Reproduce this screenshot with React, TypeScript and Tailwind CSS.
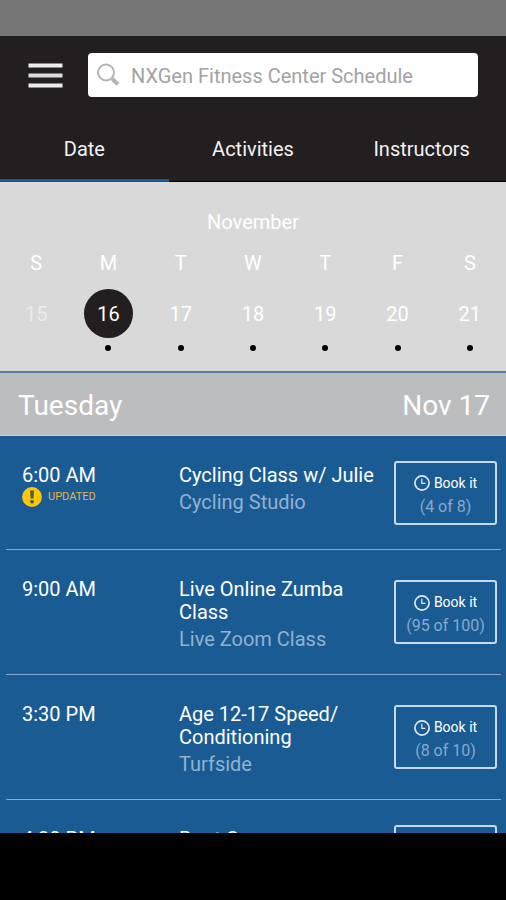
import clsx from 'clsx';

const tabs = ['Date', 'Activities', 'Instructors'];

const days = [
  { letter: 'S', name: 'Sunday', date: 15, past: true },
  { letter: 'M', name: 'Monday', date: 16, selected: true },
  { letter: 'T', name: 'Tuesday', date: 17 },
  { letter: 'W', name: 'Wednesday', date: 18 },
  { letter: 'T', name: 'Thursday', date: 19 },
  { letter: 'F', name: 'Friday', date: 20 },
  { letter: 'S', name: 'Saturday', date: 21 },
];

const classes = [
  { time: '6:00 AM', title: 'Cycling Class w/ Julie', room: 'Cycling Studio', spots: '(4 of 8)', updated: true },
  { time: '9:00 AM', title: 'Live Online Zumba Class', room: 'Live Zoom Class', spots: '(95 of 100)' },
  { time: '3:30 PM', title: 'Age 12-17 Speed/ Conditioning', room: 'Turfside', spots: '(8 of 10)' },
  { time: '4:30 PM', title: 'Boot Camp', room: 'Turfside', spots: '(6 of 12)' },
];

function MenuIcon() {
  return (
    <svg viewBox="0 0 35 25" className="h-[25px] w-[35px]" aria-hidden="true">
      <rect x="0.5" y="0.5" width="34" height="4" fill="#ededed" />
      <rect x="0.5" y="10.5" width="34" height="4" fill="#dcdcdc" />
      <rect x="0.5" y="20.5" width="34" height="4" fill="#ededed" />
    </svg>
  );
}

function SearchIcon() {
  return (
    <svg viewBox="0 0 24 24" className="size-6 shrink-0" fill="none" stroke="#b3b3b3" aria-hidden="true">
      <circle cx="10" cy="9.5" r="8" strokeWidth="2" />
      <path d="M15.5 15l2.5 2.5" strokeWidth="2.2" />
      <path d="M16.4 16l5.6 5.4" strokeWidth="4" />
    </svg>
  );
}

function ClockIcon() {
  return (
    <svg viewBox="0 0 16 16" className="size-4 shrink-0" fill="none" stroke="#dfe9f5" aria-hidden="true">
      <circle cx="8" cy="8" r="7.1" strokeWidth="1.7" />
      <path d="M7.8 3.8v4.5h3.6" strokeWidth="1.2" />
    </svg>
  );
}

function AlertIcon() {
  return (
    <svg viewBox="0 0 20 20" className="size-5 shrink-0" aria-hidden="true">
      <circle cx="10" cy="10" r="9.9" fill="#fdc60b" />
      <path d="M8 3.6h4l-.5 8h-3z" fill="#5a5c3c" />
      <circle cx="10" cy="14.7" r="1.9" fill="#5a5c3c" />
    </svg>
  );
}

function Header() {
  return (
    <header className="bg-[#231f20]">
      <div className="flex items-center px-7 pt-[17px]">
        <button type="button" aria-label="Menu">
          <MenuIcon />
        </button>
        <label className="ml-[25px] flex h-11 flex-1 items-center rounded bg-white pl-2">
          <SearchIcon />
          <input
            type="search"
            aria-label="Search schedule"
            placeholder="NXGen Fitness Center Schedule"
            className="ml-[11px] w-full min-w-0 pt-0.5 text-xl text-gray-700 outline-none placeholder:text-[#a3a3a3]"
          />
        </label>
      </div>
      <nav className="mt-5 grid grid-cols-3 border-b border-black">
        {tabs.map((tab, i) => (
          <button
            key={tab}
            type="button"
            className={clsx(
              '-mb-px border-b-[3px] pt-[18px] pb-4 text-xl leading-7 text-[#f2f2f2]',
              i === 0 ? 'border-[#1c5a96]' : 'border-transparent'
            )}
          >
            {tab}
          </button>
        ))}
      </nav>
    </header>
  );
}

function Calendar() {
  return (
    <section className="border-b-2 border-[#557ba3] bg-[#d9d9d9] pt-[26px] pb-5 text-xl text-white">
      <h2 className="text-center">November</h2>
      <div className="mt-[13px] grid grid-cols-7">
        {days.map((day) => (
          <div key={day.date} className="flex flex-col items-center">
            <span>{day.letter}</span>
            <button
              type="button"
              aria-label={`${day.name} ${day.date}`}
              className={clsx(
                'mt-3 flex size-[49px] items-center justify-center rounded-full',
                day.selected && 'bg-[#231f20]',
                day.past && 'text-[#ebebeb]'
              )}
            >
              {day.date}
            </button>
            {!day.past && <span className="mt-[7px] size-1.5 rounded-full bg-black" />}
          </div>
        ))}
      </div>
    </section>
  );
}

export default function App() {
  return (
    <div className="flex h-screen flex-col bg-black font-['Roboto',sans-serif]">
      <div className="h-9 shrink-0 bg-[#777777]" />
      <Header />
      <Calendar />
      <div className="flex h-[63px] shrink-0 items-center justify-between border-b border-[#d0d0d0] bg-[#bcbdbf] pt-1 pr-4 pl-[18px] text-[28px] text-white">
        <h3>Tuesday</h3>
        <span>Nov 17</span>
      </div>
      <main className="min-h-0 flex-1 overflow-hidden bg-[#1b5b94]">
        <ul className="mr-[5px] ml-1.5">
          {classes.map((item) => (
            <li key={item.time} className="flex min-h-[114px] border-b border-[#86a9d0] pr-1 pl-4">
              <div className="w-[157px] shrink-0 pt-7 text-xl leading-[23px] text-white">
                {item.time}
                {item.updated && (
                  <div className="flex items-center gap-1.5 text-[11px] leading-5 text-[#e2b646]">
                    <AlertIcon />
                    UPDATED
                  </div>
                )}
              </div>
              <div className="flex-1 pt-7 pr-4 pb-[23px] text-xl leading-[23px]">
                <p className="text-white">{item.title}</p>
                <p className="mt-1 text-[#91b1d1]">{item.room}</p>
              </div>
              <button
                type="button"
                className="h-16 w-[103px] shrink-0 self-center rounded-[3px] border-2 border-[#c9d9ee] pt-1 text-white"
              >
                <span className="flex items-center justify-center gap-1 text-sm leading-[23px]">
                  <ClockIcon />
                  Book it
                </span>
                <span className="block text-base leading-[23px] text-[#86a9cc]">{item.spots}</span>
              </button>
            </li>
          ))}
        </ul>
      </main>
      <footer className="h-[67px] shrink-0 bg-black" />
    </div>
  );
}
